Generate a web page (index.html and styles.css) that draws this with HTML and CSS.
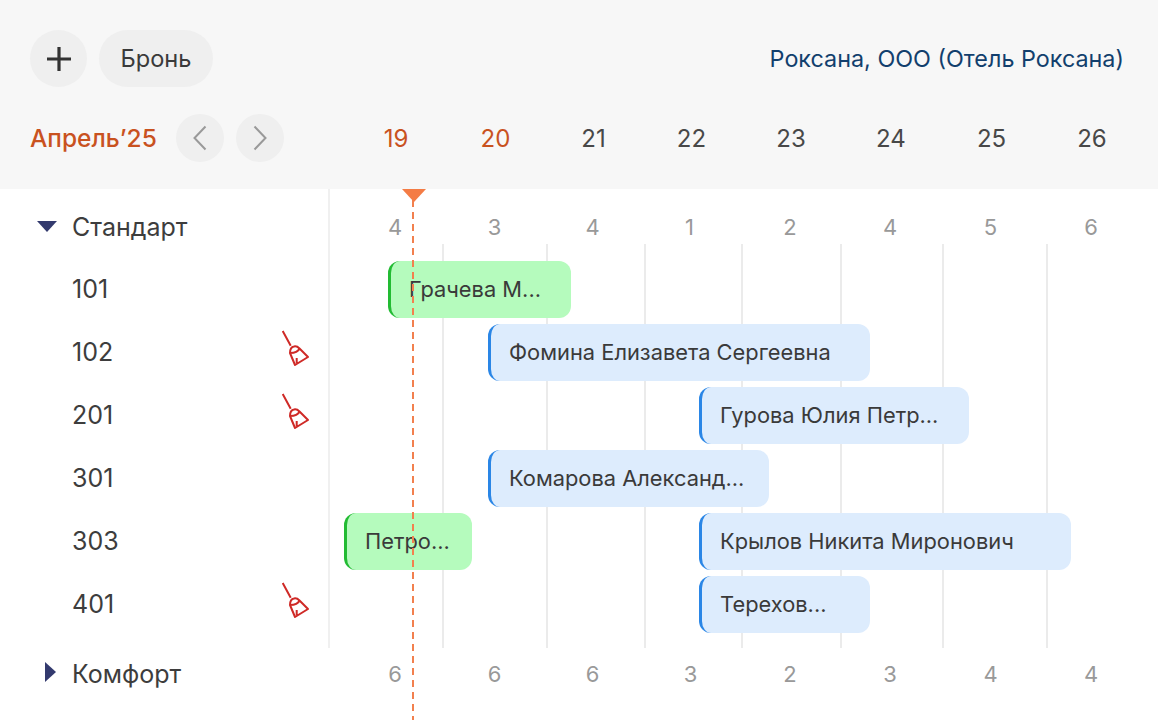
FILE: index.html
```html
<!DOCTYPE html>
<html lang="ru">
<head>
<meta charset="utf-8">
<title>Шахматка</title>
<link rel="stylesheet" href="styles.css">
</head>
<body>
<div class="page">
  <header class="head">
    <div class="top">
      <div class="actions">
        <button class="round plus"><svg width="26" height="26" viewBox="0 0 26 26"><path d="M13 1V25M1 13H25" stroke="#333" stroke-width="3.200" fill="none"/></svg></button>
        <button class="pill">Бронь</button>
      </div>
      <div class="org">Роксана, ООО (Отель Роксана)</div>
    </div>
    <div class="dates">
      <div class="month-box">
        <span class="month">Апрель’25</span>
        <button class="round nav"><svg width="16" height="26" viewBox="0 0 16 26"><path d="M13.500 1.500L2.500 13L13.500 24.500" stroke="#999" stroke-width="2" fill="none"/></svg></button>
        <button class="round nav"><svg width="16" height="26" viewBox="0 0 16 26"><path d="M2.500 1.500L13.500 13L2.500 24.500" stroke="#999" stroke-width="2" fill="none"/></svg></button>
      </div>
      <div class="days">
        <span class="day hot">19</span><span class="day hot">20</span><span class="day">21</span><span class="day">22</span><span class="day">23</span><span class="day">24</span><span class="day">25</span><span class="day">26</span>
      </div>
    </div>
  </header>

  <main class="board">
    <div class="grouprow">
      <div class="side"><svg class="tri" width="20" height="12" viewBox="0 0 20 12"><path d="M0 0H20L10 11Z" fill="#333a6e"/></svg><span>Стандарт</span></div>
      <div class="days counts"><span>4</span><span>3</span><span>4</span><span class="one">1</span><span>2</span><span>4</span><span>5</span><span>6</span></div>
    </div>

    <div class="rooms">
      <div class="lines"><i></i><i></i><i></i><i></i><i></i><i></i><i></i></div>

      <div class="row">
        <div class="side room"><span>101</span></div>
        <div class="track"><div class="bar green" style="left:58px;width:183px">Грачева М...</div></div>
      </div>
      <div class="row">
        <div class="side room"><span>102</span>
          <svg class="broom" width="30" height="38" viewBox="0 0 30 38"><path d="M2.700 1L10.700 15.700M10 23C10 20 11 17 14 16.500C16 16 18 17 19.500 18.500L28 27L15 35ZM10 23C14 23 18 22 19.500 18.500M16.700 28V33" stroke="#cf2a27" stroke-width="2" fill="none" stroke-linejoin="round"/></svg>
        </div>
        <div class="track"><div class="bar blue" style="left:158px;width:382px">Фомина Елизавета Сергеевна</div></div>
      </div>
      <div class="row">
        <div class="side room"><span>201</span>
          <svg class="broom" width="30" height="38" viewBox="0 0 30 38"><path d="M2.700 1L10.700 15.700M10 23C10 20 11 17 14 16.500C16 16 18 17 19.500 18.500L28 27L15 35ZM10 23C14 23 18 22 19.500 18.500M16.700 28V33" stroke="#cf2a27" stroke-width="2" fill="none" stroke-linejoin="round"/></svg>
        </div>
        <div class="track"><div class="bar blue" style="left:369px;width:270px">Гурова Юлия Петр...</div></div>
      </div>
      <div class="row">
        <div class="side room"><span>301</span></div>
        <div class="track"><div class="bar blue" style="left:158px;width:281px">Комарова Александ...</div></div>
      </div>
      <div class="row">
        <div class="side room"><span>303</span></div>
        <div class="track">
          <div class="bar green" style="left:14px;width:128px">Петро...</div>
          <div class="bar blue" style="left:369px;width:372px">Крылов Никита Миронович</div>
        </div>
      </div>
      <div class="row">
        <div class="side room"><span>401</span>
          <svg class="broom" width="30" height="38" viewBox="0 0 30 38"><path d="M2.700 1L10.700 15.700M10 23C10 20 11 17 14 16.500C16 16 18 17 19.500 18.500L28 27L15 35ZM10 23C14 23 18 22 19.500 18.500M16.700 28V33" stroke="#cf2a27" stroke-width="2" fill="none" stroke-linejoin="round"/></svg>
        </div>
        <div class="track"><div class="bar blue" style="left:369px;width:171px">Терехов...</div></div>
      </div>
    </div>

    <div class="grouprow last">
      <div class="side"><svg class="tri wedge" width="20" height="20" viewBox="0 0 20 20"><path d="M8 0L19 10L8 20Z" fill="#333a6e"/></svg><span>Комфорт</span></div>
      <div class="days counts"><span>6</span><span>6</span><span>6</span><span>3</span><span>2</span><span>3</span><span>4</span><span>4</span></div>
    </div>

    <div class="now"></div>
  </main>
</div>
</body>
</html>
```
FILE: styles.css
```css
* { box-sizing: border-box; }
html, body { margin: 0; padding: 0; background: #fff; }
body { font-family: Inter, "Liberation Sans", sans-serif; color: #3a3a3a; }
.page { width: 1158px; height: 720px; overflow: hidden; display: flex; flex-direction: column; }

.head { height: 189px; background: #f7f7f7; padding: 30px 34px 0 30px; flex: none; }
.top { display: flex; justify-content: space-between; align-items: center; height: 57px; }
.actions { display: flex; gap: 12px; }
button { border: 0; padding: 0; margin: 0; font: inherit; color: inherit; background: #efefef; display: flex; align-items: center; justify-content: center; }
.round { border-radius: 50%; }
.plus { width: 57px; height: 57px; }
.pill { width: 114px; height: 57px; border-radius: 28.500px; font-size: 23.600px; }
.org { font-size: 23.350px; color: #123f6d; }

.dates { display: flex; align-items: center; margin-top: 27px; height: 48px; margin-left: -30px; margin-right: -34px; }
.month-box { width: 329px; padding-left: 30px; display: flex; align-items: center; flex: none; }
.month { font-size: 24.500px; font-weight: 500; color: #c9521f; width: 146px; flex: none; white-space: nowrap; }
.nav { width: 48px; height: 48px; margin-right: 12px; flex: none; }

.days { display: grid; grid-template-columns: 100px 99px 97px 99px 100px 100px 101px 100px; width: 829px; padding-left: 17px; flex: none; }
.days > * { text-align: center; }
.day { font-size: 24px; color: #484848; }
.hot { color: #c9521f; }
.counts { color: #999; font-size: 22px; height: 100%; align-items: center; padding-left: 15px; padding-top: 4px; }
.last .counts { padding-top: 0; }
.one { transform: translateX(-1px); }

.board { position: relative; flex: 1; display: flex; flex-direction: column; }
.grouprow { display: flex; align-items: center; height: 72px; }
.grouprow.last { height: 52px; }
.side { width: 330px; flex: none; height: 100%; display: flex; align-items: center; font-size: 25px; position: relative; border-right: 2px solid #f0f0f0; color: #3d3d3d; }
.grouprow:not(.last) .side { padding-top: 4px; }
.grouprow:not(.last) .tri { margin-top: 2px; }
.grouprow.last .side { border-right: 0; }
.tri { position: absolute; left: 37px; top: 50%; transform: translateY(-50%); }
.wedge { margin-top: -2px; }
.side > span { margin-left: 72px; padding-bottom: 1px; }

.rooms { position: relative; height: 387px; }
.rooms::before { content: ""; position: absolute; left: 328px; top: 0; bottom: 0; width: 2px; background: #f0f0f0; }
.lines { position: absolute; left: 329px; top: -17px; bottom: 0; display: grid; grid-template-columns: 115px 104px 98px 97px 99px 102px 104px; }
.lines i { border-right: 2px solid #ebebeb; }

.row { display: flex; height: 63px; align-items: flex-start; }
.room { position: relative; height: 57px; border-right: 0; }
.room > span { padding-bottom: 2px; }
.broom { position: absolute; left: 280px; top: 6px; }
.track { position: relative; flex: 1; }
.bar { position: absolute; top: 0; height: 57px; border-radius: 12px; border-left: 3px solid; display: flex; align-items: center; padding: 0 0 1px 18px; font-size: 21.850px; color: #3a3a3a; white-space: nowrap; overflow: hidden; }
.green { background: #b5fbbd; border-color: #22bb33; }
.blue { background: #ddecfd; border-color: #2a86e6; }

.now { position: absolute; left: 412px; top: 11px; bottom: 0; width: 2px; background: repeating-linear-gradient(to bottom, #f2804e 0 7px, transparent 7px 12px); }
.now::before { content: ""; position: absolute; left: -10px; top: -11px; width: 0; height: 0; border-left: 12px solid transparent; border-right: 12px solid transparent; border-top: 13px solid #f47c45; }
```
